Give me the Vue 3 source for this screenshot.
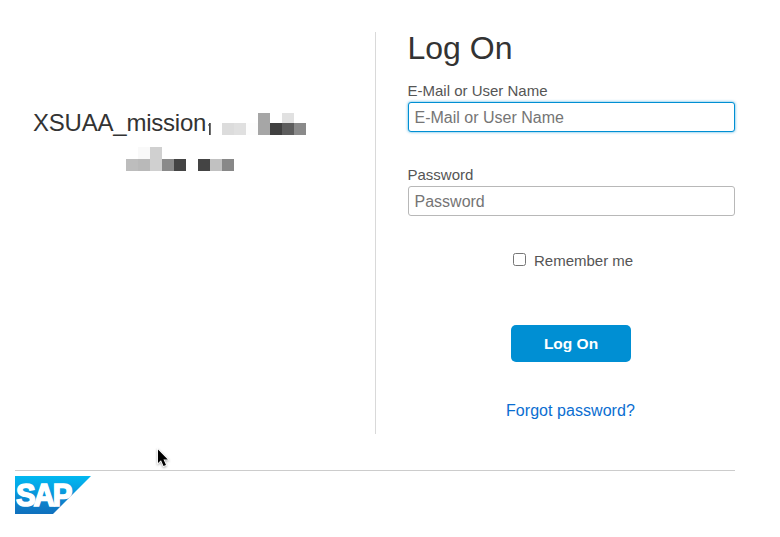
<script setup>
import { ref } from 'vue'

const user = ref('')
const password = ref('')
const remember = ref(false)

// Redacted part of the account name: [x, y, width, height, fill]
const lineOne = [
  [0, 10, 12, 12, '#dcdcdc'],
  [12, 10, 12, 12, '#e0e0e0'],
  [24, 10, 12, 12, '#fdfdfd'],
  [36, 0, 12, 22, '#a6a6a6'],
  [48, 10, 12, 12, '#404040'],
  [60, 0, 12, 10, '#e1e1e1'],
  [60, 10, 12, 12, '#5d5d5d'],
  [72, 10, 12, 12, '#8a8a8a'],
]
const lineTwo = [
  [0, 12, 12, 12, '#bdbdbd'],
  [12, 0, 12, 12, '#f9f9f9'],
  [12, 12, 12, 12, '#b9b9b9'],
  [24, 0, 12, 24, '#d0d0d0'],
  [36, 12, 12, 12, '#8a8a8a'],
  [48, 12, 12, 12, '#444444'],
  [72, 12, 12, 12, '#444444'],
  [84, 12, 12, 12, '#c1c1c1'],
  [96, 12, 12, 12, '#888888'],
]
</script>

<template>
  <div class="page">
    <main class="content">
      <section class="tenant">
        <div class="name-row">
          <span class="name">XSUAA_mission</span>
          <svg class="tail" width="3" height="12" viewBox="0 0 3 12" shape-rendering="crispEdges">
            <rect x="0" y="1" width="1" height="2" fill="#999" />
            <rect x="1" y="0" width="1" height="12" fill="#454545" />
            <rect x="2" y="0" width="1" height="12" fill="#707070" />
          </svg>
          <svg class="mask-one" width="84" height="22" shape-rendering="crispEdges">
            <rect v-for="(c, i) in lineOne" :key="i" :x="c[0]" :y="c[1]" :width="c[2]" :height="c[3]" :fill="c[4]" />
          </svg>
        </div>
        <svg class="mask-two" width="108" height="24" shape-rendering="crispEdges">
          <rect v-for="(c, i) in lineTwo" :key="i" :x="c[0]" :y="c[1]" :width="c[2]" :height="c[3]" :fill="c[4]" />
        </svg>
      </section>

      <form class="login" @submit.prevent>
        <h1>Log On</h1>
        <label class="user-label" for="user">E-Mail or User Name</label>
        <input id="user" v-model="user" class="field active user" type="text" placeholder="E-Mail or User Name" />
        <label class="pass-label" for="pass">Password</label>
        <input id="pass" v-model="password" class="field pass" type="password" placeholder="Password" />
        <label class="remember">
          <input v-model="remember" class="check" type="checkbox" />
          <span class="remember-text">Remember me</span>
        </label>
        <button class="submit" type="submit"><span>Log On</span></button>
        <a class="forgot" href="#">Forgot password?</a>
      </form>
    </main>

    <footer class="footer">
      <svg class="logo" width="76" height="38" viewBox="0 0 76 38">
        <defs>
          <linearGradient id="sky" x1="0" y1="0" x2="0" y2="1">
            <stop offset="0" stop-color="#00b8f1" />
            <stop offset="0.3" stop-color="#06a5e5" />
            <stop offset="0.65" stop-color="#0d84ce" />
            <stop offset="1" stop-color="#1070bd" />
          </linearGradient>
        </defs>
        <path d="M0 0H76L38 38H0Z" fill="url(#sky)" />
        <text class="letters" transform="translate(1 30) scale(0.95 1)">SAP</text>
      </svg>
    </footer>

    <svg class="cursor" width="16" height="22" viewBox="0 0 16 22">
      <path d="M2 1.5V15L5 12.2L7.5 18L10 17L7.5 11.5H11.8Z" fill="#000" stroke="#fff" stroke-width="1.6" paint-order="stroke" />
    </svg>
  </div>
</template>

<style>
body {
  margin: 0;
  background: #fff;
}
</style>

<style scoped>
.page {
  position: relative;
  box-sizing: border-box;
  width: 780px;
  height: 537px;
  padding: 32px 45px 0 15px;
  overflow: hidden;
  background: #fff;
  color: #333;
  font-family: "Liberation Sans", Arial, sans-serif;
}

.content {
  display: flex;
  height: 402px;
}

.tenant {
  box-sizing: border-box;
  display: flex;
  flex-direction: column;
  width: 361px;
  padding: 76px 0 0 18px;
  border-right: 1px solid #d9d9d9;
}

.name-row {
  display: flex;
  height: 30px;
}

.name {
  width: 175px;
  font-size: 24px;
  letter-spacing: -0.22px;
  line-height: 30px;
  white-space: nowrap;
}

.tail {
  margin-top: 15px;
}

.mask-one {
  margin: 5px 0 0 11px;
}

.mask-two {
  margin: 9px 0 0 93px;
}

.login {
  display: flex;
  flex-direction: column;
  width: 327px;
  margin-left: 32px;
}

h1 {
  margin: 0 0 0 -0.5px;
  height: 50px;
  font-size: 32px;
  font-weight: 400;
  line-height: 32px;
}

.user-label,
.pass-label {
  height: 20px;
  margin-left: -0.5px;
  color: #555;
  font-size: 15px;
  line-height: 18px;
}

.field {
  box-sizing: border-box;
  width: 327px;
  height: 30px;
  padding: 2px 6px 0 5.5px;
  border: 1px solid #b8b8b8;
  border-radius: 3px;
  outline: none;
  background: #fff;
  font-family: inherit;
  font-size: 16px;
}

.field::placeholder {
  color: #757575;
  opacity: 1;
}

.active {
  border-color: #008fd3;
  box-shadow: 0 0 3px rgba(0, 143, 211, 0.75);
}

.user {
  margin-bottom: 34px;
}

.remember {
  display: flex;
  align-items: center;
  height: 20px;
  margin: 34px 0 0 105px;
  color: #555;
  font-size: 15px;
}

.check {
  box-sizing: border-box;
  appearance: none;
  width: 13px;
  height: 13px;
  margin: -2px 8px 0 0;
  border: 1px solid #767676;
  border-radius: 2.5px;
  background: #fff;
}

.check:checked {
  background: #008fd3;
}

.submit {
  width: 120px;
  height: 37px;
  margin: 55px 0 0 103px;
  padding: 0;
  border: 0;
  border-radius: 5px;
  background: #008fd3;
  color: #fff;
  font-family: inherit;
  font-size: 15.5px;
  font-weight: 700;
}

.forgot {
  height: 20px;
  margin: 39px 0 0 98px;
  color: #0a6ed1;
  font-size: 16px;
  letter-spacing: 0.05px;
  line-height: 20px;
  text-decoration: none;
}

.footer {
  margin-top: 36px;
  padding-top: 5px;
  border-top: 1px solid #ccc;
}

.logo {
  display: block;
}

.letters {
  fill: #fff;
  stroke: #fff;
  stroke-width: 1.6px;
  font-family: "Liberation Sans", Arial, sans-serif;
  font-size: 31px;
  font-weight: 700;
  letter-spacing: -2.2px;
}

.cursor {
  position: absolute;
  left: 156px;
  top: 448px;
  filter: drop-shadow(0 1px 1px rgba(0, 0, 0, 0.35));
}
</style>
